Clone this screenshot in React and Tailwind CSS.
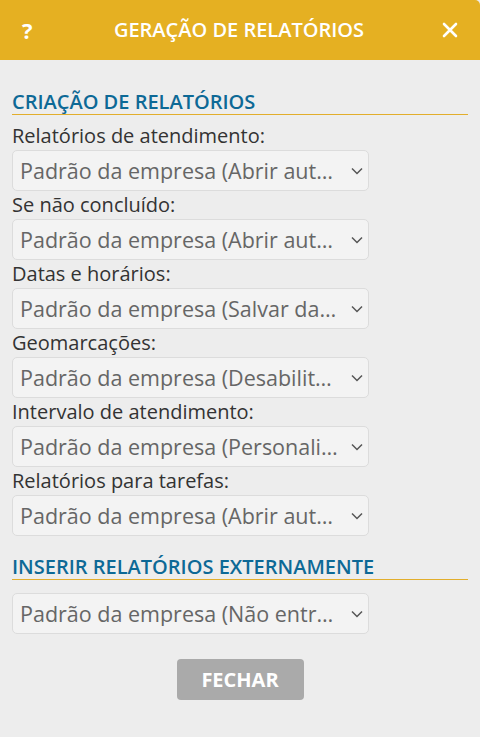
import React from 'react';

const font = { fontFamily: '"Open Sans", "Noto Sans", sans-serif' };

const fields = [
  { label: 'Relatórios de atendimento:', value: 'Padrão da empresa (Abrir automaticamente)' },
  { label: 'Se não concluído:', value: 'Padrão da empresa (Abrir automaticamente)' },
  { label: 'Datas e horários:', value: 'Padrão da empresa (Salvar data e hora)' },
  { label: 'Geomarcações:', value: 'Padrão da empresa (Desabilitado)' },
  { label: 'Intervalo de atendimento:', value: 'Padrão da empresa (Personalizado)' },
  { label: 'Relatórios para tarefas:', value: 'Padrão da empresa (Abrir automaticamente)' },
];

function Chevron() {
  return (
    <svg width="12" height="8" viewBox="0 0 12 8" className="shrink-0">
      <path d="M1 1.5 L6 6.5 L11 1.5" fill="none" stroke="#555" strokeWidth="1.5" />
    </svg>
  );
}

function SelectBox({ value }) {
  return (
    <div className="flex items-center w-[357px] h-[41px] rounded-[5px] border border-[#dcdcdc] bg-[#f3f3f3] pl-[7px] pr-[5px]">
      <span className="flex-1 min-w-0 truncate text-[21.5px] text-[#666] leading-6 pr-[11px]">{value}</span>
      <Chevron />
    </div>
  );
}

function SectionTitle({ children }) {
  return (
    <div>
      <h3 className="text-[20px] font-semibold leading-6 text-[#0d6996]">{children}</h3>
      <div className="h-px bg-[#e2ae2c]" />
    </div>
  );
}

export default function App() {
  return (
    <div className="w-[480px] h-[737px] bg-[#ededed] overflow-hidden" style={font}>
      <div className="h-[60px] bg-[#e5b022] rounded-tr-[5px] flex items-center justify-between pl-[22px] pr-[22px] text-white">
        <span className="text-[22px] font-bold w-[14px]">?</span>
        <span className="text-[20px] font-semibold">GERAÇÃO DE RELATÓRIOS</span>
        <svg width="16" height="16" viewBox="0 0 16 16">
          <path d="M2 2 L14 14 M14 2 L2 14" stroke="#fff" strokeWidth="2.6" strokeLinecap="round" />
        </svg>
      </div>

      <div className="px-3 pt-[30px]">
        <SectionTitle>CRIAÇÃO DE RELATÓRIOS</SectionTitle>
        <div className="mt-[9px] flex flex-col gap-[2px]">
          {fields.map(f => (
            <div key={f.label}>
              <div className="text-[20px] leading-6 text-[#333] mb-[2px]">{f.label}</div>
              <SelectBox value={f.value} />
            </div>
          ))}
        </div>

        <div className="mt-[19px]">
          <SectionTitle>INSERIR RELATÓRIOS EXTERNAMENTE</SectionTitle>
        </div>
        <div className="mt-[13px]">
          <SelectBox value="Padrão da empresa (Não entrar)" />
        </div>

        <div className="flex justify-center mt-[25px]">
          <button className="w-[127px] h-[41px] rounded-[4px] bg-[#aaaaaa] text-white font-bold text-[20px]">
            FECHAR
          </button>
        </div>
      </div>
    </div>
  );
}
